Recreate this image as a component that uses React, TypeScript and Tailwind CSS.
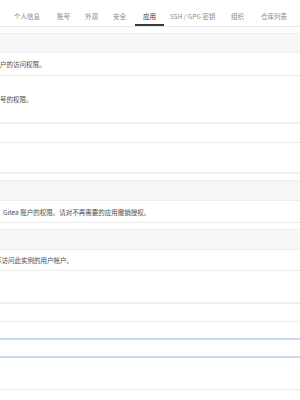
import React from "react";

const tabs = [
  { label: "个人信息", w: "w-[43px]" },
  { label: "账号", w: "w-[28px]" },
  { label: "外观", w: "w-[28px]" },
  { label: "安全", w: "w-[30px]" },
  { label: "应用", w: "w-[27px]", active: true },
  { label: "SSH / GPG 密钥", w: "w-[61px]" },
  { label: "组织", w: "w-[30px]" },
  { label: "仓库列表", w: "w-[40px]" },
];

export default function App() {
  return (
    <div
      className="w-[300px] h-[400px] bg-white overflow-hidden flex flex-col text-[6.5px] text-[#4a4a4a]"
      style={{ fontFamily: '"Noto Sans CJK SC", "Noto Sans", sans-serif' }}
    >
      {/* tab bar */}
      <div className="h-[27px] shrink-0 border-b border-[#e8e8e8] flex pl-[14px]">
        {tabs.map((t) => (
          <div key={t.label} className={`${t.w} shrink-0 h-[26px] flex`}>
            <div
              className={
                t.active
                  ? "h-[26px] -ml-[8px] px-[8px] pt-[11px] leading-[10px] border-b-2 border-[#3a3a3a] text-[#333] whitespace-nowrap"
                  : "h-[26px] pt-[11px] leading-[10px] text-[#8a8a8a] whitespace-nowrap"
              }
            >
              {t.label}
            </div>
          </div>
        ))}
      </div>

      <div className="h-[6px] shrink-0" />

      {/* section A */}
      <div className="h-[20px] shrink-0 bg-[#f6f6f6] border-y border-[#eeeeee]" />
      <div className="h-[23px] shrink-0 border-b border-[#ececec] flex items-center pt-[1px]">
        <span className="whitespace-nowrap">户的访问权限。</span>
      </div>
      <div className="h-[48px] shrink-0 border-b-2 border-[#f0f0f0] pt-[18px] leading-[10px]">
        <span className="whitespace-nowrap">号的权限。</span>
      </div>
      <div className="h-[19px] shrink-0 border-b border-[#ececec]" />
      <div className="h-[31px] shrink-0 border-b-2 border-[#f0f0f0]" />

      <div className="h-[6px] shrink-0" />

      {/* section B */}
      <div className="h-[21px] shrink-0 bg-[#f6f6f6] border-y border-[#eeeeee]" />
      <div className="h-[22px] shrink-0 border-b border-[#ececec] flex items-center pt-[2px] pl-[3px]">
        <span className="whitespace-nowrap">Gitea 账户的权限。请对不再需要的应用撤销授权。</span>
      </div>

      <div className="h-[6px] shrink-0" />

      {/* section C */}
      <div className="h-[21px] shrink-0 bg-[#f6f6f6] border-y border-[#eeeeee]" />
      <div className="h-[21px] shrink-0 border-b border-[#ececec] flex items-center pt-[1px]">
        <span className="-ml-[5px] whitespace-nowrap">序访问此实例的用户帐户。</span>
      </div>
      <div className="h-[33px] shrink-0 border-b-2 border-[#eeeeee]" />
      <div className="h-[18px] shrink-0 border-b border-[#eeeeee]" />
      <div className="h-[18px] shrink-0 border-b-2 border-[#c9d9ee]" />
      <div className="h-[18px] shrink-0 border-b-2 border-[#c9d9ee]" />
      <div className="h-[32px] shrink-0 border-b border-[#ececec]" />
    </div>
  );
}
